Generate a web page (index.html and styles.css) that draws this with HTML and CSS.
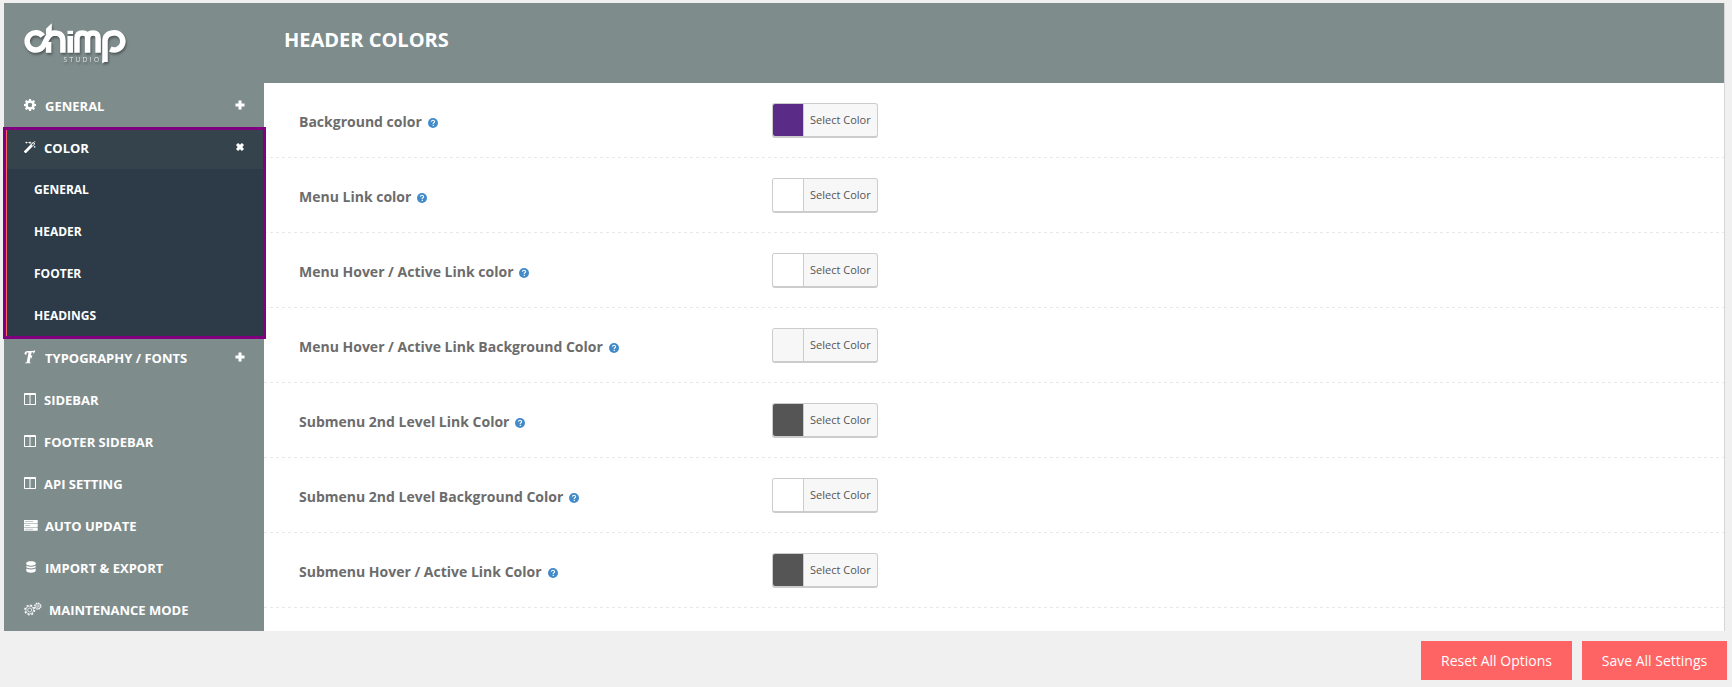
FILE: index.html
```html
<!DOCTYPE html>
<html lang="en">
<head>
<meta charset="utf-8">
<title>Header Colors</title>
<link rel="stylesheet" href="styles.css">
</head>
<body>
<svg class="defs" width="0" height="0">
  <defs>
    <symbol id="plus" viewBox="0 0 10 10"><path d="M3.500.5h3v3h3v3h-3v3h-3v-3h-3v-3h3z"/></symbol>
    <symbol id="cross" viewBox="0 0 10 10"><path d="M1 3.100 3.100 1 5 2.700 6.900 1 9 3.100 7.300 5 9 6.900 6.900 9 5 7.300 3.100 9 1 6.900 2.700 5z"/></symbol>
    <symbol id="gear" viewBox="0 0 12 12"><path fill-rule="evenodd" d="M5 0h2l.3 1.600 1 .4L9.700 1.100l1.300 1.300L10.100 3.700l.4 1L12 5v2l-1.500.3-.4 1L11 9.700 9.700 11l-1.400-.9-1 .4L7 12H5l-.3-1.500-1-.4-1.400.9L1 9.700l.9-1.400-.4-1L0 7V5l1.500-.3.4-1L1 2.300 2.300 1l1.400.9 1-.4zM6 3.800A2.200 2.200 0 1 0 6 8.200 2.200 2.200 0 0 0 6 3.800z"/></symbol>
    <symbol id="wand" viewBox="0 0 12 12"><path d="M0 10.200 8.800 1.200q.5-.5 1 0l1 1q.5.500 0 1L2.100 12q-.5.200-.9-.1L.1 10.900q-.3-.3-.1-.7z"/><path d="M7.500 3.900 9.200 2.100l.9.900-1.800 1.700z" class="hole"/><path d="M1.300.9l1 .4.400-1 .4 1 1 .4-1 .4-.4 1-.4-1-1-.4zM4.300.9l1.300.4L6 0l.5 1.300 1.300.4-1.300.5L6 3.500l-.4-1.300-1.300-.5zM10.800 0l.3.500.6.200-.6.300-.3.600-.2-.6-.6-.3.600-.2zM10.700 4.600l.4.900.9.400-.9.400-.4.900-.4-.9-.9-.4.900-.4z"/></symbol>
    <symbol id="font" viewBox="0 0 12 14"><path d="M1.200 3.800Q1.300 1.800 4 1.700L9.500 1.500 11 1" fill="none" stroke="#fff" stroke-width="1.600"/><path d="M4.700 1.500h3L5.600 12.300l.9.300-.2.700H1.200l.2-.7 1.300-.4zM10.800.8l-.7 2.600h-.7L9.200 1.800zM4 5.900h3l.8-.9h.5L7.600 8.300H7l-.2-1H4z"/><circle cx="1.700" cy="3.800" r="1"/></symbol>
    <symbol id="columns" viewBox="0 0 12 12"><path fill-rule="evenodd" d="M0 .8Q0 0 .8 0h10.400q.8 0 .8.800v10.400q0 .8-.8.800H.8q-.8 0-.8-.8zM1 2v9h4.500V2zM6.500 2v9H11V2z"/></symbol>
    <symbol id="server" viewBox="0 0 14 11"><path d="M0 0h13.700v3.200H0zM0 3.800h13.700V7H0zM0 7.600h13.700v3.200H0z"/><path class="line" d="M1 1.500h8M1 5.500h5M1 9.300h8"/></symbol>
    <symbol id="database" viewBox="0 0 10 12"><path d="M.3 2C.3-.4 9.700-.4 9.700 2v1.300C9.700 5.200.3 5.200.3 3.300zM.3 4.700q4.700 2.200 9.400 0v1.400c0 1.900-9.400 1.900-9.400 0zM.3 7.400q4.700 2.200 9.400 0v2.200c0 3-9.400 3-9.400 0z"/></symbol>
    <symbol id="gears" viewBox="0 0 18 14"><g fill="none" stroke="#fff"><circle cx="5.700" cy="8" r="4.800" stroke-width="1.500" stroke-dasharray="1.900 1.870"/><circle cx="5.700" cy="8" r="3.900" stroke-width=".7"/><circle cx="5.700" cy="8" r="2" stroke-width=".7"/><circle cx="13.800" cy="4.200" r="3.100" stroke-width="1.100" stroke-dasharray="1.500 .93"/><circle cx="13.800" cy="4.200" r="2.500" stroke-width=".6"/><circle cx="13.800" cy="4.200" r="1.100" stroke-width=".7"/></g></symbol>
    <symbol id="help" viewBox="0 0 10 10"><circle cx="5" cy="5" r="5"/><path d="M3.300 3.700Q3.600 2.300 5 2.300T6.600 3.700Q6.600 4.500 5.300 5.200V6" fill="none" stroke="#fff" stroke-width="1.100"/><path d="M4.700 6.800h1.200v1.100H4.700z" fill="#fff"/></symbol>
  </defs>
</svg>
<div class="panel">
  <aside class="sidebar">
    <div class="brand">
      <svg class="logo" width="116" height="54" viewBox="0 0 116 54" role="img" aria-label="chimp studio">
        <g fill="none" stroke="#fff" stroke-width="5.500">
          <path d="M24.800 20.200A8.700 8.700 0 1 0 24.300 31.200C28 27.500 28.500 17.300 36.500 17.100Q44.900 17.100 44.900 25V36.800"/>
          <path d="M30.600 36.800V26"/><path d="M52.200 20V36.800"/>
          <path d="M59 36.800V22.500Q59 16.900 64.500 16.900T69.600 22.500V36.800M69.600 22.500Q69.600 16.900 75 16.900T80.100 22.500V36.800"/>
          <path d="M87 46V24.500Q87.500 17 97 16.800A8.600 8.600 0 1 1 92.300 33"/>
        </g>
        <path fill="#fff" d="M28 12.700l5.800-5.500v7.500L28 19zM49.500 14.700H55v3.200h-5.500zM84.250 44h5.500l-5.500 3.500z"/>
        <text x="45.500" y="46.400" class="logo-sub" textLength="35.500">STUDIO</text>
      </svg>
    </div>
    <nav class="nav">
      <a class="item"><svg class="ico" width="12" height="12"><use href="#gear"/></svg><span class="near">GENERAL</span><svg class="toggle" width="10" height="10"><use href="#plus"/></svg></a>
      <div class="group">
        <a class="item open"><svg class="ico" width="12" height="12"><use href="#wand"/></svg><span>COLOR</span><svg class="toggle" width="10" height="10"><use href="#cross"/></svg></a>
        <a class="sub">GENERAL</a>
        <a class="sub">HEADER</a>
        <a class="sub">FOOTER</a>
        <a class="sub">HEADINGS</a>
      </div>
      <a class="item"><svg class="ico" width="12" height="14"><use href="#font"/></svg><span class="near">TYPOGRAPHY / FONTS</span><svg class="toggle" width="10" height="10"><use href="#plus"/></svg></a>
      <a class="item"><svg class="ico" width="12" height="12"><use href="#columns"/></svg><span>SIDEBAR</span></a>
      <a class="item"><svg class="ico" width="12" height="12"><use href="#columns"/></svg><span>FOOTER SIDEBAR</span></a>
      <a class="item"><svg class="ico" width="12" height="12"><use href="#columns"/></svg><span>API SETTING</span></a>
      <a class="item"><svg class="ico" width="14" height="11"><use href="#server"/></svg><span class="tight">AUTO UPDATE</span></a>
      <a class="item"><svg class="ico db" width="10" height="12"><use href="#database"/></svg><span>IMPORT &amp; EXPORT</span></a>
      <a class="item"><svg class="ico" width="18" height="14"><use href="#gears"/></svg><span class="tight">MAINTENANCE MODE</span></a>
    </nav>
  </aside>
  <main class="main">
    <header class="head"><h1>HEADER COLORS</h1></header>
    <section class="rows">
      <div class="row"><label>Background color<svg class="help" width="10" height="10"><use href="#help"/></svg></label><button class="picker purple">Select Color</button></div>
      <div class="row"><label>Menu Link color<svg class="help" width="10" height="10"><use href="#help"/></svg></label><button class="picker white">Select Color</button></div>
      <div class="row"><label>Menu Hover / Active Link color<svg class="help" width="10" height="10"><use href="#help"/></svg></label><button class="picker white">Select Color</button></div>
      <div class="row"><label>Menu Hover / Active Link Background Color<svg class="help" width="10" height="10"><use href="#help"/></svg></label><button class="picker light">Select Color</button></div>
      <div class="row"><label>Submenu 2nd Level Link Color<svg class="help" width="10" height="10"><use href="#help"/></svg></label><button class="picker dark">Select Color</button></div>
      <div class="row"><label>Submenu 2nd Level Background Color<svg class="help" width="10" height="10"><use href="#help"/></svg></label><button class="picker white">Select Color</button></div>
      <div class="row"><label>Submenu Hover / Active Link Color<svg class="help" width="10" height="10"><use href="#help"/></svg></label><button class="picker dark">Select Color</button></div>
    </section>
  </main>
</div>
<footer class="actions"><button class="action">Reset All Options</button><button class="action save">Save All Settings</button></footer>
</body>
</html>
```
FILE: styles.css
```css
* { box-sizing: border-box; }
body { margin: 0; padding: 3px 0 0 4px; height: 687px; overflow: hidden; background: #f0f0f0; font-family: "Open Sans", "Noto Sans", sans-serif; }
.defs { position: absolute; }
button { font-family: inherit; margin: 0; }
.panel { display: flex; width: 1721px; height: 628px; border-right: 1px solid #d6d6d6; background: #fff; }
.sidebar { width: 260px; background: #7f8c8c; color: #fff; }
.brand { height: 82px; padding: 13px 0 0 14px; }
.logo { display: block; filter: drop-shadow(1px 2px 1px rgba(0,0,0,.35)); }
.logo-sub { font: 6.500px "Open Sans", sans-serif; fill: #e3e6e6; }
.item { display: flex; align-items: center; height: 42px; padding: 0 19px 2px 20px; font-size: 13px; font-weight: 700; fill: #fff; }
.item span { margin-left: 8px; padding-top: 1px; white-space: nowrap; }
.item .near { margin-left: 9px; }
.item .tight { margin-left: 7px; }
.ico { flex: none; }
.ico.db { margin: 0 1px 0 2px; }
.hole { fill: #35434c; }
.line { stroke: #7f8c8c; stroke-width: .7; opacity: .7; }
.toggle { margin-left: auto; }
.group { position: relative; width: 263px; height: 212px; margin: 0 0 -2px -1px; border: 3px solid #800080; background: #2d3b48; box-shadow: inset 1px 0 #ff6464; }
.item.open { height: 39px; margin-left: 1px; padding: 0 18px 5px 17px; background: #35434c; }
.sub { display: flex; align-items: center; height: 42px; padding: 0 0 2px 28px; font-size: 12px; font-weight: 700; }
.main { flex: 1; }
.head { height: 80px; padding: 23px 0 0 20px; background: #7f8c8c; }
h1 { margin: 0; color: #fff; font-size: 20px; line-height: 28px; font-weight: 700; }
.row { display: flex; height: 75px; padding: 20px 0 0 35px; background: repeating-linear-gradient(90deg, #e8e8e8 0 3px, transparent 3px 6px) 0 100% / 100% 1px no-repeat; }
label { display: flex; width: 473px; height: 36px; align-items: center; color: #6c6c6c; font-size: 14px; font-weight: 700; }
.help { margin: 3px 0 0 6px; fill: #428bca; }
.picker { width: 106px; height: 35px; padding: 0 0 1px; border: 1px solid #ccc; border-bottom-width: 2px; border-radius: 3px; background: #f7f7f7; color: #555; font-size: 11px; display: flex; align-items: center; }
.picker::before { content: ""; flex: none; width: 30px; height: 32px; margin: 0 6px -1px 0; border-right: 1px solid #ccc; border-radius: 2px 0 0 2px; background: var(--swatch); background-clip: padding-box; }
.purple { --swatch: #5b2c87; }
.white { --swatch: #fff; }
.light { --swatch: #f7f7f7; }
.dark { --swatch: #555; }
.actions { display: flex; justify-content: flex-end; gap: 10px; padding: 10px 5px 0 0; }
.action { width: 151px; height: 39px; padding: 0 0 1px; border: 0; background: #ff6464; color: #fff; font-size: 14px; }
.save { width: 145px; }
```
